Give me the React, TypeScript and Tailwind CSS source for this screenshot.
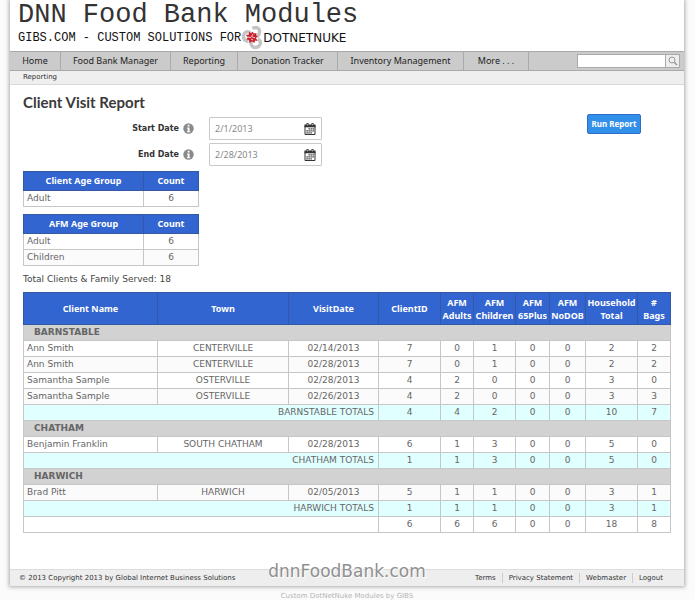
import { useState } from "react";

const navItems = [
  { label: "Home", width: "w-[51px]" },
  { label: "Food Bank Manager", width: "w-[110px]" },
  { label: "Reporting", width: "w-[67px]" },
  { label: "Donation Tracker", width: "w-[100px]" },
  { label: "Inventory Management", width: "w-[126px]" },
  { label: "More . . .", width: "w-[65px]" },
];

const footerLinks = ["Terms", "Privacy Statement", "Webmaster", "Logout"];

const columns = [
  { label: "Client Name", width: "w-[134px]" },
  { label: "Town", width: "w-[131px]" },
  { label: "VisitDate", width: "w-[90px]" },
  { label: "ClientID", width: "w-[62px]" },
  { label: "AFM\nAdults", width: "w-[33px]" },
  { label: "AFM\nChildren", width: "w-[42px]" },
  { label: "AFM\n65Plus", width: "w-[34px]" },
  { label: "AFM\nNoDOB", width: "w-[36px]" },
  { label: "Household\nTotal", width: "w-[52px]" },
  { label: "#\nBags", width: "w-[33px]" },
];

type Visit = { name: string; town: string; date: string; counts: number[]; alt?: boolean };

const groups: { town: string; visits: Visit[]; totals: number[] }[] = [
  {
    town: "BARNSTABLE",
    visits: [
      { name: "Ann Smith", town: "CENTERVILLE", date: "02/14/2013", counts: [7, 0, 1, 0, 0, 2, 2] },
      { name: "Ann Smith", town: "CENTERVILLE", date: "02/28/2013", counts: [7, 0, 1, 0, 0, 2, 2], alt: true },
      { name: "Samantha Sample", town: "OSTERVILLE", date: "02/28/2013", counts: [4, 2, 0, 0, 0, 3, 0] },
      { name: "Samantha Sample", town: "OSTERVILLE", date: "02/26/2013", counts: [4, 2, 0, 0, 0, 3, 3], alt: true },
    ],
    totals: [4, 4, 2, 0, 0, 10, 7],
  },
  {
    town: "CHATHAM",
    visits: [
      { name: "Benjamin Franklin", town: "SOUTH CHATHAM", date: "02/28/2013", counts: [6, 1, 3, 0, 0, 5, 0] },
    ],
    totals: [1, 1, 3, 0, 0, 5, 0],
  },
  {
    town: "HARWICH",
    visits: [
      { name: "Brad Pitt", town: "HARWICH", date: "02/05/2013", counts: [5, 1, 1, 0, 0, 3, 1], alt: true },
    ],
    totals: [1, 1, 1, 0, 0, 3, 1],
  },
];

const grandTotals = [6, 6, 6, 0, 0, 18, 8];

const cell = "h-4 border border-[#c6c6c6] p-0 leading-[15px]";
const headCell =
  "border border-[#3558a5] bg-[#3265cf] p-0 text-center font-['Noto_Sans',sans-serif] font-bold text-white";

function DnnLogo() {
  return (
    <svg viewBox="0 0 22 24" className="h-6 w-[22px] shrink-0" aria-hidden="true">
      <g fill="none" stroke="#c4c4c4" strokeWidth="3.400">
        <path d="M11.500 2.500c4-2.500 7.500 0 7 3.500s-1.500 3.500-2.500 5" />
        <path d="M9 6.500C5.500 4.500 2.500 7 2.500 10.500s2 4.500 5 5" />
        <path d="M17 13c3 2 3 5 1 7s-5.500 2-7 0-1-3-1-4" />
      </g>
      <path
        d="M8 5.500l2 1.500 2-1.500.5 2 3-.5-.5 2.500 2 .5-2 2 1.500 3-2.500-.5-.5 2.500-2.500-1.500-2.500 1.500-.5-3-2.500-.5 1-2-1.500-2.500 3-.5z"
        fill="#c8202c"
      />
      <path d="M6 11l4 .5M12 8l-1.500 2.500 3.500 1.500M10 13l2 1" fill="none" stroke="#fff" strokeWidth="0.8" />
    </svg>
  );
}

function InfoIcon() {
  return (
    <svg viewBox="0 0 11 11" className="size-[11px]" aria-hidden="true">
      <circle cx="5.500" cy="5.500" r="5.200" fill="#8a8a8a" />
      <path d="M4.700 1.800h1.800v1.700H4.700zM4 4.500h2.500v3.700H7.300v1H3.900v-1h.8V5.400H4z" fill="#fff" />
    </svg>
  );
}

function CalendarIcon() {
  return (
    <svg viewBox="0 0 12 12" className="size-3" aria-hidden="true">
      <path d="M1 2.500h10v9H1z" fill="#fff" stroke="#333" />
      <path d="M.5 1.500h11V4.300H.5z" fill="#333" />
      <path d="M2.500 0h2v3h-2zM7.500 0h2v3h-2z" fill="#333" />
      <path d="M3.500 .8v1.600M8.500 .8v1.600" stroke="#fff" strokeWidth=".6" />
      <path d="M4.500 5.800h5.400M2.400 7.800h7.500M2.400 9.800h5.400" stroke="#333" strokeWidth="1.300" strokeDasharray="1.400 .6" />
    </svg>
  );
}

function DateField({ id, label, initial }: { id: string; label: string; initial: string }) {
  const [value, setValue] = useState(initial);

  return (
    <div className="flex items-center">
      <div className="flex w-[171px] items-center justify-end gap-1">
        <label htmlFor={id} className="text-[8px] font-bold text-[#333]">
          {label}
        </label>
        <InfoIcon />
      </div>
      <div className="ml-[15px] flex h-[23px] w-[113px] items-center rounded-[1px] border border-[#c9c9c9] bg-white px-[5px]">
        <input
          id={id}
          value={value}
          onChange={(e) => setValue(e.target.value)}
          className="min-w-0 flex-1 font-['Noto_Sans',sans-serif] text-[9px] text-[#888] outline-none"
        />
        <button type="button" aria-label={`Pick ${label}`}>
          <CalendarIcon />
        </button>
      </div>
    </div>
  );
}

function AgeTable({ title, rows }: { title: string; rows: [string, number][] }) {
  return (
    <table className="w-[176px] table-fixed border-collapse text-[9px] text-[#666]">
      <thead>
        <tr className="h-[19px]">
          <th className={headCell + " w-[120px]"}>{title}</th>
          <th className={headCell}>Count</th>
        </tr>
      </thead>
      <tbody>
        {rows.map(([name, count], i) => (
          <tr key={name} className={i % 2 ? "bg-[#fbfbfb]" : "bg-white"}>
            <td className={cell + " pl-[3px]"}>{name}</td>
            <td className={cell + " text-center"}>{count}</td>
          </tr>
        ))}
      </tbody>
    </table>
  );
}

function Counts({ values }: { values: number[] }) {
  return values.map((n, i) => (
    <td key={i} className={cell + " text-center"}>
      {n}
    </td>
  ));
}

function VisitTable() {
  return (
    <table className="w-full table-fixed border-collapse text-[9px] text-[#666]">
      <colgroup>
        {columns.map((c) => (
          <col key={c.label} className={c.width} />
        ))}
      </colgroup>
      <thead>
        <tr className="h-8">
          {columns.map((c) => (
            <th key={c.label} className={headCell + " leading-[13px] whitespace-pre-line"}>
              {c.label}
            </th>
          ))}
        </tr>
      </thead>
      {groups.map((g) => (
        <tbody key={g.town}>
          <tr className="bg-[#d2d2d2]">
            <th colSpan={10} scope="rowgroup" className={cell + " pl-[10px] text-left font-bold"}>
              {g.town}
            </th>
          </tr>
          {g.visits.map((v, i) => (
            <tr key={i} className={v.alt ? "bg-[#fbfbfb]" : "bg-white"}>
              <td className={cell + " pl-[3px]"}>{v.name}</td>
              <td className={cell + " text-center"}>{v.town}</td>
              <td className={cell + " text-center"}>{v.date}</td>
              <Counts values={v.counts} />
            </tr>
          ))}
          <tr className="bg-[#e0ffff]">
            <td colSpan={3} className={cell + " pr-1 text-right"}>
              {g.town} TOTALS
            </td>
            <Counts values={g.totals} />
          </tr>
        </tbody>
      ))}
      <tfoot>
        <tr className="bg-white">
          <td colSpan={3} className={cell} />
          <Counts values={grandTotals} />
        </tr>
      </tfoot>
    </table>
  );
}

export default function App() {
  return (
    <div className="min-h-screen bg-[#fbfbfb] pr-[11px] pl-[10px] font-['DejaVu_Sans',sans-serif] text-[#333]">
      <div className="bg-white shadow-[0_0_4px_1px_#aaa]">
        <header className="h-[51px] px-2 font-['Liberation_Mono',monospace]">
          <p className="text-[27px] leading-[31px] whitespace-nowrap text-[#333]">DNN Food Bank Modules</p>
          <div className="flex h-[14px] items-center whitespace-nowrap text-[#111]">
            <span className="text-[12px]">GIBS.COM - CUSTOM SOLUTIONS FOR</span>
            <DnnLogo />
            <span className="font-['DejaVu_Sans',sans-serif] text-[12px]">DOTNETNUKE</span>
          </div>
        </header>

        <nav className="flex h-5 items-center border-y border-[#a9a9a9] bg-[#cbcbcb] font-['Noto_Sans',sans-serif] text-[9px] text-[#222]">
          {navItems.map((item) => (
            <a
              key={item.label}
              href="#"
              className={
                "flex h-full items-center justify-center border-r border-[#aaa] whitespace-nowrap " + item.width
              }
            >
              {item.label}
            </a>
          ))}
          <form className="mr-1 ml-auto flex h-[14px]" onSubmit={(e) => e.preventDefault()}>
            <input aria-label="Search" className="w-[89px] border border-[#aaa] bg-white px-1 outline-none" />
            <button
              aria-label="Search"
              className="flex w-[14px] items-center justify-center border border-l-0 border-[#aaa] bg-[#eee]"
            >
              <svg viewBox="0 0 10 10" className="size-[10px]" fill="none" stroke="#999">
                <circle cx="4" cy="4" r="3" />
                <path d="M6.300 6.300L9 9" strokeWidth="1.600" />
              </svg>
            </button>
          </form>
        </nav>

        <div className="flex h-[14px] items-center border-b border-[#d8d8d8] bg-[#efefef] px-[13px] text-[7px]">
          <a href="#">Reporting</a>
        </div>

        <main className="px-[13px] pt-[6px] pb-9">
          <h1 className="font-['Lato',sans-serif] text-[15px] leading-[22px] font-bold text-[#3a3a3a]">
            Client Visit Report
          </h1>

          <div className="mt-1 flex items-start justify-between">
            <div className="flex flex-col gap-[3px]">
              <DateField id="start" label="Start Date" initial="2/1/2013" />
              <DateField id="end" label="End Date" initial="2/28/2013" />
            </div>
            <button
              type="button"
              className="mr-[30px] -mt-[3px] h-5 w-[54px] rounded-[2px] border border-[#2b6fc0] bg-[#3390ea] font-['Noto_Sans',sans-serif] text-[8px] font-bold whitespace-nowrap text-white"
            >
              Run Report
            </button>
          </div>

          <div className="mt-[5px] flex flex-col gap-[7px]">
            <AgeTable title="Client Age Group" rows={[["Adult", 6]]} />
            <AgeTable
              title="AFM Age Group"
              rows={[
                ["Adult", 6],
                ["Children", 6],
              ]}
            />
          </div>

          <p className="my-[6px] text-[9px] leading-[14px] text-[#444]">
            Total Clients &amp; Family Served: 18
          </p>

          <VisitTable />
        </main>

        <footer className="relative flex h-[17px] items-center border-t border-[#ddd] bg-[#eee] px-[9px] text-[7px]">
          <span>© 2013 Copyright 2013 by Global Internet Business Solutions</span>
          <ul className="mr-[6px] ml-auto flex">
            {footerLinks.map((label) => (
              <li key={label} className="border-l border-[#ccc] px-[6px] first:border-l-0">
                <a href="#">{label}</a>
              </li>
            ))}
          </ul>
          {/* Watermark straddles the footer edge */}
          <span className="absolute inset-x-0 -top-[9px] text-center text-[17px] leading-5 text-[#909090] [text-shadow:1px_1px_0_#fff]">
            dnnFoodBank.com
          </span>
        </footer>
      </div>
      <p className="pt-[5px] text-center text-[7px] leading-[10px] text-[#b5b5b5]">
        Custom DotNetNuke Modules by GIBS
      </p>
    </div>
  );
}
